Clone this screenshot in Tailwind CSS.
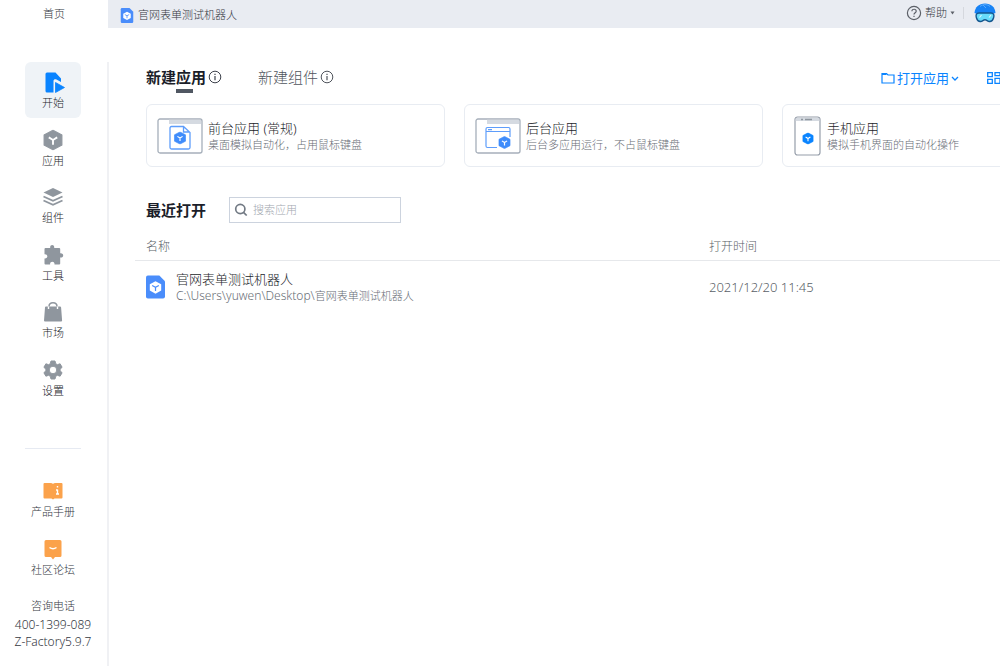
<!DOCTYPE html>
<html lang="zh-CN">
<head>
<meta charset="utf-8">
<meta name="viewport" content="width=device-width, initial-scale=1">
<title>Z-Factory</title>
<script src="https://cdn.jsdelivr.net/npm/@tailwindcss/browser@4"></script>
</head>
<body class="flex min-h-screen flex-col overflow-x-hidden bg-white font-['Noto_Sans','Noto_Sans_CJK_SC',sans-serif] font-light text-[#1b1e2a]">
<svg class="hidden" aria-hidden="true">
  <symbol id="cube" viewBox="0 0 20 20"><path fill="currentColor" d="M10 .6 18.500 5.100v9.800L10 19.400 1.500 14.900V5.100z" stroke="currentColor" stroke-linejoin="round"/><path d="M6 7.500 10 10l4-2.500M10 10v4.500" fill="none" stroke="var(--mark)" stroke-width="1.800"/></symbol>
  <symbol id="appfile" viewBox="0 0 20 24"><path fill="#4a8dfb" d="M2 0h12l6 6v16a2 2 0 0 1-2 2H2a2 2 0 0 1-2-2V2a2 2 0 0 1 2-2z"/><path fill="#fff" d="m10 6 6 3.200v6.600L10 19l-6-3.200V9.200z"/><path d="m6.500 10.500 3.500 1.800 3.500-1.800M10 12.300v4" fill="none" stroke="#4a8dfb" stroke-width="1.300"/></symbol>
  <symbol id="info" viewBox="0 0 14 14"><circle cx="7" cy="7" r="5.800" fill="none" stroke="currentColor"/><path d="M7 6v4.200M7 3.700v1.200" stroke="currentColor" stroke-width="1.200"/></symbol>
</svg>

<header class="flex h-7 shrink-0">
  <a href="#" class="flex w-[108px] shrink-0 items-center justify-center pt-px text-[11px] text-[#34383f]">首页</a>
  <div class="flex min-w-0 flex-1 items-center justify-between bg-[#e9ecf2] pl-3 pr-1">
    <a href="#" class="flex items-center gap-1 pt-[2px] text-[11px] text-[#34383f]"><svg class="h-[15px] w-[14px]"><use href="#appfile"/></svg>官网表单测试机器人</a>
    <div class="flex h-full items-center pb-[2px]">
      <button class="flex items-center gap-[3px] text-[11px] text-[#34383f]">
        <svg class="size-4" viewBox="0 0 16 16" fill="none" stroke="#5c6068" stroke-width="1.200"><circle cx="8" cy="8" r="6.600"/><path d="M5.900 6.300c0-2.800 4.300-2.700 4.300-.1 0 1.600-2.200 1.500-2.200 3.400M8 10.800v1.300"/></svg>
        帮助
        <svg class="h-1 w-[5px]" viewBox="0 0 5 4"><path d="M.5.5h4L2.500 3.500z" fill="#5c6068"/></svg>
      </button>
      <span class="ml-2 h-3 w-px bg-[#d5d8de]"></span>
      <button class="ml-[10px]" aria-label="用户">
        <svg class="h-5 w-[22px]" viewBox="0 0 22 20"><path d="M.5 10C1 4 5 .5 11 .5S21 4 21.500 10l-3 1H3z" fill="#1682f5"/><path d="M6 3.500c3-2.500 7-2.500 10 0M9 2l3 3" stroke="#58a9fb" stroke-width="1" fill="none"/><path d="M5 10h12c3 0 3.300 2.500 2.500 5-.8 2.800-3 3.800-5 3.300-1.400-.5-1.900-1.500-3.500-1.500s-2.100 1-3.500 1.500c-2 .5-4.200-.5-5-3.300-.8-2.500-.5-5 2.500-5z" fill="#67dcfb" stroke="#15578f" stroke-width="1.400"/><path d="m5.500 14.500 2-2.500M15 14.500l2-2.500" stroke="#d9f8ff" stroke-width="1.200"/></svg>
      </button>
    </div>
  </div>
</header>

<div class="flex min-w-0 flex-1 pt-[34px]">
  <aside class="flex w-[109px] shrink-0 flex-col items-center border-r-2 border-[#f0f1f4] pr-px text-[11px]">
    <nav class="flex h-[344px] w-14 flex-col justify-between">
      <a href="#" class="flex h-14 flex-col items-center gap-px rounded-md bg-[#eff3f7] pt-2">
        <svg class="size-6" viewBox="0 0 24 24"><path fill="#0a84ff" d="M6 2.500h8.500l5.500 6v3.500l-4.500-2.500c-1.500-.7-3 0-3 1.500v11.500H6A1.500 1.500 0 0 1 4.500 21V4A1.500 1.500 0 0 1 6 2.500z"/><path fill="#0a84ff" d="M14.500 12.500v10l9-5z" stroke="#0a84ff" stroke-width=".8" stroke-linejoin="round"/></svg>
        <span>开始</span></a>
      <a href="#" class="flex h-14 flex-col items-center gap-px pt-2">
        <svg class="size-6" viewBox="0 0 24 24"><use href="#cube" x="1.500" y="1.500" width="21" height="21" class="text-[#8f969e] [--mark:#fff]"/></svg>
        <span>应用</span></a>
      <a href="#" class="flex h-14 flex-col items-center gap-px pt-2">
        <svg class="size-6" viewBox="0 0 24 24"><path fill="#8f969e" d="m12 3 9.500 4.500L12 12 2.500 7.500z"/><path d="m2.500 11.500 9.500 4.200 9.500-4.200M2.500 15.500l9.500 4.200 9.500-4.200" fill="none" stroke="#8f969e" stroke-width="1.800"/></svg>
        <span>组件</span></a>
      <a href="#" class="flex h-14 flex-col items-center gap-px pt-2">
        <svg class="size-6" viewBox="0 0 24 24"><path fill="#8f969e" d="M4.500 5h4.700c-.6-4 4.600-4 4 0h5q1 0 1 1v4.300c4-.6 4 4.800 0 4.200v6q0 1-1 1h-4.700c.4-3.600-4.800-3.600-4.400 0H4.500q-1 0-1-1v-5c3.800.5 3.800-4.800 0-4.300V6q0-1 1-1z"/></svg>
        <span>工具</span></a>
      <a href="#" class="flex h-14 flex-col items-center gap-px pt-2">
        <svg class="size-6" viewBox="0 0 24 24"><path fill="#8f969e" d="M5 6.500h14q1 0 1.100 1l1 13q0 1-1 1H4q-1 0-1-1l1-13q0-1 1-1z"/><path d="M7.500 9V6.500c0-5 9-5 9 0V9" fill="none" stroke="#fff" stroke-width="1.400"/><path d="M8 6.500c0-5 8-5 8 0" fill="none" stroke="#8f969e" stroke-width="1.500"/></svg>
        <span>市场</span></a>
      <a href="#" class="flex h-14 flex-col items-center gap-px pt-2">
        <svg class="size-6" viewBox="0 0 24 24"><path fill="#8f969e" fill-rule="evenodd" d="M10 3h4l.7 2.700 1.700 1 2.700-.9 2 3.500-2 1.900v1.600l2 1.900-2 3.500-2.700-.9-1.700 1L14 21h-4l-.7-2.700-1.700-1-2.700.9-2-3.500 2-1.900v-1.600l-2-1.900 2-3.500 2.700.9 1.700-1zm2 5.200a3.800 3.800 0 1 0 0 7.600 3.800 3.800 0 0 0 0-7.600z" stroke="#8f969e" stroke-linejoin="round"/></svg>
        <span>设置</span></a>
    </nav>
    <hr class="mt-[42px] w-14 border-[#e6eaf2]">
    <div class="mt-[33px] flex flex-col items-center gap-5 text-[#34383f]">
      <a href="#" class="flex h-[38px] flex-col items-center justify-between">
        <svg class="h-[18px] w-5 shrink-0" viewBox="0 0 20 18"><path fill="#fba24b" d="M1.500 1h6Q9.500 1 10 2q.5-1 2.500-1h6q1 0 1 1v13.500q0 1-1 1h-7l-1.500 1-1.500-1h-7q-1 0-1-1V2q0-1 1-1z"/><path d="M14.500 4v1.600M14.500 7.500v5M13 12h3M13 8h1.500" stroke="#fff" stroke-width="1.400"/></svg>
        <span>产品手册</span></a>
      <a href="#" class="flex h-[38px] flex-col items-center justify-between">
        <svg class="h-5 w-[18px] shrink-0" viewBox="0 0 18 20"><path fill="#fba24b" d="M2 0h14q1.500 0 1.500 1.500v14Q17.500 17 16 17h-5l-2 2.500L7 17H2Q.5 17 .5 15.500v-14Q.5 0 2 0z"/><path d="M5.500 7.500q3.500 2.500 7 0" fill="none" stroke="#fff" stroke-width="1.500"/></svg>
        <span>社区论坛</span></a>
    </div>
    <div class="mt-[18px] flex flex-col items-center text-xs leading-[17px] text-[#34383f]">
      <span class="text-[11px] leading-5">咨询电话</span><span>400-1399-089</span><span>Z-Factory5.9.7</span>
    </div>
  </aside>

  <main class="min-w-0 flex-1 overflow-hidden pl-[26px]">
    <div class="flex items-start justify-between pl-[11px]">
      <div class="flex gap-9" role="tablist">
        <button role="tab" aria-selected="true" class="flex flex-col items-center text-[15px] leading-6 text-[#1b1e2a]">
          <span class="flex items-center gap-[2px] pt-[3px] font-bold">新建应用<svg class="size-[14px] text-[#3d414b]"><use href="#info"/></svg></span>
          <span class="h-1 w-[17px] bg-[#505762]"></span>
        </button>
        <button role="tab" aria-selected="false" class="flex items-center gap-[2px] self-start pt-[3px] text-[15px] leading-6 text-[#50555d]">新建组件<svg class="size-[14px]"><use href="#info"/></svg></button>
      </div>
      <div class="flex items-center gap-7 pt-[6px] text-[#0a84ff]">
        <button class="flex items-center gap-[2px] text-[13px] font-normal leading-5"><svg class="size-[14px]" viewBox="0 0 14 14" fill="none" stroke="currentColor" stroke-width="1.200"><path d="M1 2.500h4.500L7 4h6v8H1z"/><path d="M1 3h4.500" stroke-width="2"/></svg>打开应用<svg class="size-2" viewBox="0 0 8 8" fill="none" stroke="currentColor" stroke-width="1.300"><path d="m1 3 3 3 3-3"/></svg></button>
        <button aria-label="视图"><svg class="h-[14px] w-[13px]" viewBox="0 0 13 14" fill="none" stroke="currentColor" stroke-width="1.300"><path d="M.7 1.700h4.600v4H.7zM.7 8.300h4.600v4H.7zM8 1.700h5v3H8zM8 7.300h5v5H8z"/></svg></button>
      </div>
    </div>

    <div class="flex gap-[19px] pl-[11px] pt-[11px] *:h-[63px] *:w-[299px] *:shrink-0 *:rounded-md *:border *:border-[#e8ecf2] *:text-left">
      <button class="flex items-center gap-[5px] pl-[10px]">
        <svg class="h-9 w-[46px]" viewBox="0 0 46 36"><rect x="1" y="1" width="44" height="34" rx="2" fill="#fff" stroke="#a6afba" stroke-width="1.300"/><path d="M12 1.700h32V6H12z" fill="#d5dae1"/><path d="M14.500 8.500h12l6.500 6v15q0 1.500-1.500 1.500h-17Q13 31 13 29.500V10q0-1.500 1.500-1.500zM26.500 8.500v5.500h6" fill="none" stroke="#5e9dfb" stroke-width="1.300"/><use href="#cube" x="16.500" y="13.500" width="13" height="13" class="text-[#3f8cfb] [--mark:#fff]"/></svg>
        <span class="flex flex-col"><span class="text-[13px] leading-[18px]">前台应用 (常规)</span><span class="text-[11px] leading-4 text-[#696e76]">桌面模拟自动化，占用鼠标键盘</span></span>
      </button>
      <button class="flex items-center gap-[5px] pl-[10px]">
        <svg class="h-9 w-[46px]" viewBox="0 0 46 36"><rect x="1" y="1" width="44" height="34" rx="2" fill="#fff" stroke="#a6afba" stroke-width="1.300"/><path d="M12 1.700h32V6H12z" fill="#d5dae1"/><path d="M22 29.500H12.500q-1.500 0-1.500-1.500V11q0-1.500 1.500-1.500h21q1.500 0 1.500 1.500v8M11 13.500h24M13 11.600h4" fill="none" stroke="#5e9dfb" stroke-width="1.200"/><use href="#cube" x="22.500" y="18" width="14" height="13" class="text-[#3f8cfb] [--mark:#fff]"/></svg>
        <span class="flex flex-col"><span class="text-[13px] leading-[18px]">后台应用</span><span class="text-[11px] leading-4 text-[#696e76]">后台多应用运行，不占鼠标键盘</span></span>
      </button>
      <button class="flex items-center gap-[6px] pl-[11px]">
        <svg class="h-10 w-[27px]" viewBox="0 0 27 40"><rect x="1" y="1" width="25" height="38" rx="2.500" fill="#fff" stroke="#969eaa" stroke-width="1.200"/><path d="M1.700 2h23.600v3H1.700z" fill="#d5dae1"/><path d="M7 3.500h2M11 3.500h7" stroke="#8f969e" stroke-width="1.400"/><use href="#cube" x="7.500" y="16.500" width="13" height="12" class="text-[#0a84ff] [--mark:#fff]"/></svg>
        <span class="flex flex-col"><span class="text-[13px] leading-[18px]">手机应用</span><span class="text-[11px] leading-4 text-[#696e76]">模拟手机界面的自动化操作</span></span>
      </button>
    </div>

    <div class="flex items-center gap-[23px] pl-[11px] pt-[30px]">
      <h2 class="text-[15px] font-bold leading-6 text-[#1b1e2a]">最近打开</h2>
      <label class="flex h-[26px] w-[172px] items-center gap-[5px] border border-[#ccd3de] pl-1">
        <svg class="size-[14px] shrink-0" viewBox="0 0 14 14" fill="none" stroke="#727a84" stroke-width="1.700"><circle cx="6.300" cy="6" r="4.600"/><path d="m9.500 9.300 3.200 3.200"/></svg>
        <input type="search" aria-label="搜索应用" placeholder="搜索应用" class="w-full min-w-0 text-[11px] outline-none placeholder:text-[#a2a7af]">
      </label>
    </div>

    <table class="mt-[11px] w-full table-fixed text-left">
      <thead class="border-b border-[#e6e8eb] text-xs text-[#5a5f67]">
        <tr><th class="h-[26px] w-[574px] pl-[11px] font-light">名称</th><th class="font-light">打开时间</th></tr>
      </thead>
      <tbody>
        <tr>
          <td class="h-[54px] pl-[11px]"><a href="#" class="flex items-center gap-[11px]"><svg class="h-6 w-[19px]"><use href="#appfile"/></svg><span class="flex flex-col"><span class="text-[13px] leading-[18px]">官网表单测试机器人</span><span class="text-[11px] leading-4 text-[#696e76]"><span class="text-xs leading-4">C:\Users\yuwen\Desktop\</span>官网表单测试机器人</span></span></a></td>
          <td class="text-[13px] text-[#5a5f67]">2021/12/20 11:45</td>
        </tr>
      </tbody>
    </table>
  </main>
</div>
</body>
</html>
